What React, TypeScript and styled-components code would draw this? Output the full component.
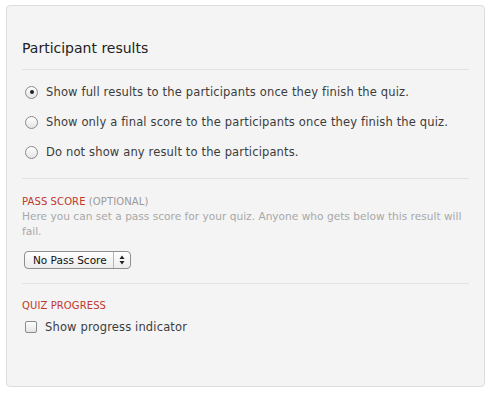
import styled, { createGlobalStyle } from "styled-components";

const GlobalStyle = createGlobalStyle`
  html, body {
    margin: 0;
    padding: 0;
    background: #ffffff;
    font-family: "DejaVu Sans", "Liberation Sans", sans-serif;
  }
`;

const Page = styled.div`
  padding: 5px 6px 0 6px;
  width: 479px;
`;

const Panel = styled.section`
  box-sizing: border-box;
  width: 479px;
  height: 382px;
  background: #f4f4f4;
  border: 1px solid #dcdcdc;
  border-radius: 4px;
  padding: 34px 15px 0 15px;
`;

const Title = styled.h3`
  margin: 0;
  font-size: 14px;
  font-weight: normal;
  color: #222;
  padding-bottom: 13px;
  border-bottom: 1px solid #e2e2e2;
`;

const Group = styled.div`
  display: flex;
  flex-direction: column;
  gap: 16px;
  padding: 15px 0 19px;
  border-bottom: 1px solid #e2e2e2;
`;

const Option = styled.label<{ $top?: number }>`
  display: flex;
  align-items: center;
  gap: 8px;
  font-size: 11.5px;
  color: #3c3c3c;
  letter-spacing: 0.15px;
  padding-left: 3px;
  margin-top: ${(p) => p.$top ?? 0}px;
`;

const Radio = styled.span<{ $checked?: boolean }>`
  box-sizing: border-box;
  width: 13px;
  height: 13px;
  border-radius: 50%;
  border: 1px solid #8a8a8a;
  background: linear-gradient(#ffffff, #e4e4e4);
  display: flex;
  align-items: center;
  justify-content: center;
  &::after {
    content: "";
    width: 4px;
    height: 4px;
    border-radius: 50%;
    background: ${(p) => (p.$checked ? "#222" : "transparent")};
  }
`;

const Box = styled.span`
  box-sizing: border-box;
  width: 12px;
  height: 12px;
  border-radius: 2px;
  border: 1px solid #8a8a8a;
  background: linear-gradient(#ffffff, #e4e4e4);
`;

const Section = styled.div<{ $top: number; $bottom: number }>`
  padding: ${(p) => p.$top}px 0 ${(p) => p.$bottom}px;
  border-bottom: 1px solid #e2e2e2;
  &:last-child {
    border-bottom: none;
  }
`;

const Label = styled.div`
  font-size: 10px;
  color: #c0392b;
  letter-spacing: 0.1px;
  span {
    color: #9a9a9a;
  }
`;

const Help = styled.p`
  margin: 2px 0 10px;
  font-size: 10.6px;
  line-height: 15px;
  color: #a8a8a8;
`;

const Select = styled.div`
  display: inline-flex;
  align-items: stretch;
  height: 16px;
  border: 1px solid #8e8e8e;
  border-radius: 4px;
  background: linear-gradient(#ffffff, #ececec);
  font-size: 10.5px;
  color: #111;
  margin-left: 2px;
  span {
    display: flex;
    align-items: center;
    padding: 0 6px 0 8px;
    border-right: 1px solid #b5b5b5;
  }
`;

const Arrows = styled.svg`
  width: 16px;
  height: 16px;
`;

export default function App() {
  return (
    <>
      <GlobalStyle />
      <Page>
        <Panel>
          <Title>Participant results</Title>
          <Group>
            <Option>
              <Radio $checked />
              Show full results to the participants once they finish the quiz.
            </Option>
            <Option>
              <Radio />
              Show only a final score to the participants once they finish the quiz.
            </Option>
            <Option>
              <Radio />
              Do not show any result to the participants.
            </Option>
          </Group>
          <Section $top={17} $bottom={14}>
            <Label>
              PASS SCORE <span>(OPTIONAL)</span>
            </Label>
            <Help>
              Here you can set a pass score for your quiz. Anyone who gets below this result will fail.
            </Help>
            <Select>
              <span>No Pass Score</span>
              <Arrows viewBox="0 0 16 16">
                <path d="M5.5 7 L8 3.5 L10.5 7 Z" fill="#222" />
                <path d="M5.5 9 L8 12.5 L10.5 9 Z" fill="#222" />
              </Arrows>
            </Select>
          </Section>
          <Section $top={16} $bottom={17}>
            <Label>QUIZ PROGRESS</Label>
            <Option $top={9}>
              <Box />
              Show progress indicator
            </Option>
          </Section>
        </Panel>
      </Page>
    </>
  );
}
